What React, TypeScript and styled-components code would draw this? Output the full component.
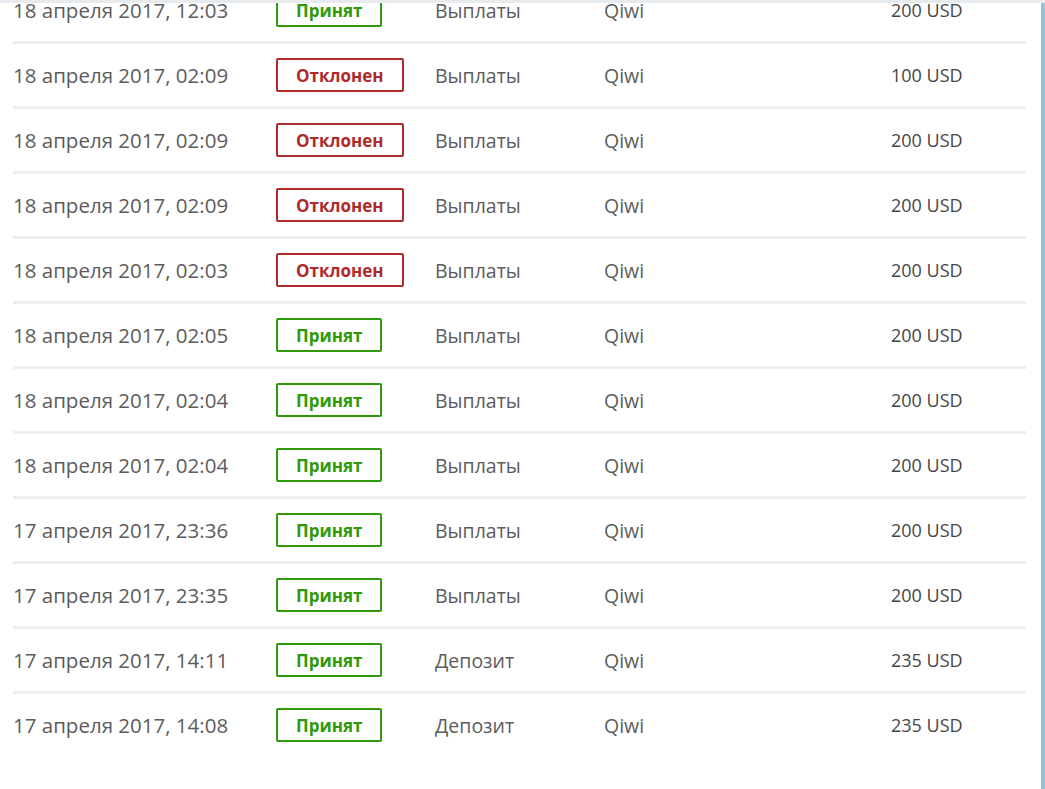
import * as React from 'react';
import styled, { createGlobalStyle } from 'styled-components';

/** data */
type Status = 'ok' | 'fail';

interface Payment {
    date: string;
    status: Status;
    kind: string;
    method: string;
    amount: string;
}

const payments: Payment[] = [
    { date: '18 апреля 2017, 12:03', status: 'ok', kind: 'Выплаты', method: 'Qiwi', amount: '200 USD' },
    { date: '18 апреля 2017, 02:09', status: 'fail', kind: 'Выплаты', method: 'Qiwi', amount: '100 USD' },
    { date: '18 апреля 2017, 02:09', status: 'fail', kind: 'Выплаты', method: 'Qiwi', amount: '200 USD' },
    { date: '18 апреля 2017, 02:09', status: 'fail', kind: 'Выплаты', method: 'Qiwi', amount: '200 USD' },
    { date: '18 апреля 2017, 02:03', status: 'fail', kind: 'Выплаты', method: 'Qiwi', amount: '200 USD' },
    { date: '18 апреля 2017, 02:05', status: 'ok', kind: 'Выплаты', method: 'Qiwi', amount: '200 USD' },
    { date: '18 апреля 2017, 02:04', status: 'ok', kind: 'Выплаты', method: 'Qiwi', amount: '200 USD' },
    { date: '18 апреля 2017, 02:04', status: 'ok', kind: 'Выплаты', method: 'Qiwi', amount: '200 USD' },
    { date: '17 апреля 2017, 23:36', status: 'ok', kind: 'Выплаты', method: 'Qiwi', amount: '200 USD' },
    { date: '17 апреля 2017, 23:35', status: 'ok', kind: 'Выплаты', method: 'Qiwi', amount: '200 USD' },
    { date: '17 апреля 2017, 14:11', status: 'ok', kind: 'Депозит', method: 'Qiwi', amount: '235 USD' },
    { date: '17 апреля 2017, 14:08', status: 'ok', kind: 'Депозит', method: 'Qiwi', amount: '235 USD' },
];

const statusLabel: Record<Status, string> = {
    ok: 'Принят',
    fail: 'Отклонен',
};

const statusColor: Record<Status, string> = {
    ok: '#2e9a07',
    fail: '#b02a2a',
};

/** styles */
const GlobalStyle = createGlobalStyle`
    html, body {
        margin: 0;
        padding: 0;
        background: #fff;
        overflow: hidden;
    }
    body {
        font-family: "Open Sans", "Noto Sans", sans-serif;
    }
`;

const Page = styled.div`
    display: grid;
    grid-template-columns: 1fr 4px;
    grid-template-rows: 3px 1fr;
    width: 1045px;
    height: 789px;
    overflow: hidden;
`;

const TopBar = styled.div`
    grid-column: 1 / 3;
    background: #e8ebed;
    position: relative;
    z-index: 1;
`;

const ScrollEdge = styled.div`
    background: #93c2dc;
`;

const Main = styled.div`
    overflow: hidden;
`;

const List = styled.div`
    display: flex;
    flex-direction: column;
    margin-top: -24px;
    padding: 0 15px 0 13px;
`;

const Row = styled.div`
    display: grid;
    grid-template-columns: 263px 159px 169px 287px 1fr;
    align-items: center;
    height: 62px;
    border-bottom: 3px solid #eeeeee;
    &:last-child {
        border-bottom-color: transparent;
    }
`;

const Cell = styled.div<{ $size?: number; $dark?: boolean }>`
    font-size: ${(p) => p.$size ?? 19.5}px;
    color: ${(p) => (p.$dark ? '#464646' : '#5c5c5c')};
    white-space: nowrap;
`;

const Badge = styled.span<{ $status: Status }>`
    display: inline-flex;
    align-items: center;
    justify-content: center;
    box-sizing: border-box;
    height: 34px;
    padding: 0 18px;
    border: 2px solid ${(p) => statusColor[p.$status]};
    border-radius: 2px;
    color: ${(p) => statusColor[p.$status]};
    font-size: 17px;
    font-weight: 700;
    justify-self: start;
`;

function App() {
    return (
        <>
            <GlobalStyle />
            <Page>
                <TopBar />
                <Main>
                    <List>
                        {payments.map((p, i) => (
                            <Row key={i}>
                                <Cell $size={20.5}>{p.date}</Cell>
                                <Badge $status={p.status}>{statusLabel[p.status]}</Badge>
                                <Cell>{p.kind}</Cell>
                                <Cell>{p.method}</Cell>
                                <Cell $size={18} $dark>
                                    {p.amount}
                                </Cell>
                            </Row>
                        ))}
                    </List>
                </Main>
                <ScrollEdge />
            </Page>
        </>
    );
}

export default App;
